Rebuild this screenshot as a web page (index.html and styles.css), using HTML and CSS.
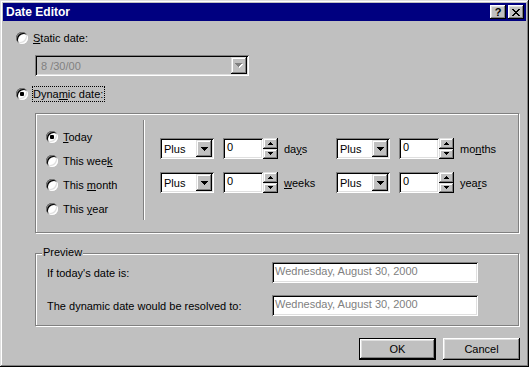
FILE: index.html
```html
<!DOCTYPE html>
<html lang="en">
<head>
  <meta charset="UTF-8">
  <title>Date Editor</title>
  <link rel="stylesheet" href="styles.css">
</head>
<body>
  <div class="window">
    <div class="titlebar">
      <span class="title">Date Editor</span>
      <div class="title-buttons">
        <span class="tbtn help">?</span>
        <span class="tbtn close">
          <svg width="8" height="7" viewBox="0 0 8 7" shape-rendering="crispEdges"><path d="M0 0h2v1H0zM6 0h2v1H6zM1 1h2v1H1zM5 1h2v1H5zM2 2h4v1H2zM3 3h2v1H3zM2 4h4v1H2zM1 5h2v1H1zM5 5h2v1H5zM0 6h2v1H0zM6 6h2v1H6z" fill="#000"/></svg>
        </span>
      </div>
    </div>

    <div class="content">
      <div class="option static">
        <span class="radio"></span>
        <span class="label"><u>S</u>tatic date:</span>
      </div>

      <div class="combo combo-date disabled">
        <span class="combo-text">8 /30/00</span>
        <span class="drop">
          <svg width="8" height="5" viewBox="0 0 8 5" shape-rendering="crispEdges"><path d="M1 1h7v1H1zM2 2h5v1H2zM3 3h3v1H3zM4 4h1v1H4z" fill="#fff"/><path d="M0 0h7v1H0zM1 1h5v1H1zM2 2h3v1H2zM3 3h1v1H3z" fill="#808080"/></svg>
        </span>
      </div>

      <div class="option dynamic">
        <span class="radio checked"></span>
        <span class="label focus">Dyna<u>m</u>ic date:</span>
      </div>

      <div class="group dyn-group">
        <div class="period-list">
          <div class="option"><span class="radio checked"></span><span class="label"><u>T</u>oday</span></div>
          <div class="option"><span class="radio"></span><span class="label">This wee<u>k</u></span></div>
          <div class="option"><span class="radio"></span><span class="label">This <u>m</u>onth</span></div>
          <div class="option"><span class="radio"></span><span class="label">This <u>y</u>ear</span></div>
        </div>
        <div class="vsep"></div>
        <div class="offsets">
          <div class="offset-row">
            <div class="offset">
              <div class="combo combo-small"><span class="combo-text">Plus</span><span class="drop"><svg width="7" height="4" viewBox="0 0 7 4" shape-rendering="crispEdges"><path d="M0 0h7v1H0zM1 1h5v1H1zM2 2h3v1H2zM3 3h1v1H3z" fill="#000"/></svg></span></div>
              <div class="num">0</div>
              <div class="spin">
                <span class="spin-btn"><svg width="5" height="3" viewBox="0 0 5 3" shape-rendering="crispEdges"><path d="M2 0h1v1H2zM1 1h3v1H1zM0 2h5v1H0z" fill="#000"/></svg></span>
                <span class="spin-btn"><svg width="5" height="3" viewBox="0 0 5 3" shape-rendering="crispEdges"><path d="M0 0h5v1H0zM1 1h3v1H1zM2 2h1v1H2z" fill="#000"/></svg></span>
              </div>
              <span class="unit">da<u>y</u>s</span>
            </div>
            <div class="offset">
              <div class="combo combo-small"><span class="combo-text">Plus</span><span class="drop"><svg width="7" height="4" viewBox="0 0 7 4" shape-rendering="crispEdges"><path d="M0 0h7v1H0zM1 1h5v1H1zM2 2h3v1H2zM3 3h1v1H3z" fill="#000"/></svg></span></div>
              <div class="num">0</div>
              <div class="spin">
                <span class="spin-btn"><svg width="5" height="3" viewBox="0 0 5 3" shape-rendering="crispEdges"><path d="M2 0h1v1H2zM1 1h3v1H1zM0 2h5v1H0z" fill="#000"/></svg></span>
                <span class="spin-btn"><svg width="5" height="3" viewBox="0 0 5 3" shape-rendering="crispEdges"><path d="M0 0h5v1H0zM1 1h3v1H1zM2 2h1v1H2z" fill="#000"/></svg></span>
              </div>
              <span class="unit">mo<u>n</u>ths</span>
            </div>
          </div>
          <div class="offset-row">
            <div class="offset">
              <div class="combo combo-small"><span class="combo-text">Plus</span><span class="drop"><svg width="7" height="4" viewBox="0 0 7 4" shape-rendering="crispEdges"><path d="M0 0h7v1H0zM1 1h5v1H1zM2 2h3v1H2zM3 3h1v1H3z" fill="#000"/></svg></span></div>
              <div class="num">0</div>
              <div class="spin">
                <span class="spin-btn"><svg width="5" height="3" viewBox="0 0 5 3" shape-rendering="crispEdges"><path d="M2 0h1v1H2zM1 1h3v1H1zM0 2h5v1H0z" fill="#000"/></svg></span>
                <span class="spin-btn"><svg width="5" height="3" viewBox="0 0 5 3" shape-rendering="crispEdges"><path d="M0 0h5v1H0zM1 1h3v1H1zM2 2h1v1H2z" fill="#000"/></svg></span>
              </div>
              <span class="unit"><u>w</u>eeks</span>
            </div>
            <div class="offset">
              <div class="combo combo-small"><span class="combo-text">Plus</span><span class="drop"><svg width="7" height="4" viewBox="0 0 7 4" shape-rendering="crispEdges"><path d="M0 0h7v1H0zM1 1h5v1H1zM2 2h3v1H2zM3 3h1v1H3z" fill="#000"/></svg></span></div>
              <div class="num">0</div>
              <div class="spin">
                <span class="spin-btn"><svg width="5" height="3" viewBox="0 0 5 3" shape-rendering="crispEdges"><path d="M2 0h1v1H2zM1 1h3v1H1zM0 2h5v1H0z" fill="#000"/></svg></span>
                <span class="spin-btn"><svg width="5" height="3" viewBox="0 0 5 3" shape-rendering="crispEdges"><path d="M0 0h5v1H0zM1 1h3v1H1zM2 2h1v1H2z" fill="#000"/></svg></span>
              </div>
              <span class="unit">yea<u>r</u>s</span>
            </div>
          </div>
        </div>
      </div>

      <div class="group preview">
        <span class="legend">Preview</span>
        <div class="preview-row">
          <span class="preview-label">If today's date is:</span>
          <div class="field">Wednesday, August 30, 2000</div>
        </div>
        <div class="preview-row">
          <span class="preview-label">The dynamic date would be resolved to:</span>
          <div class="field">Wednesday, August 30, 2000</div>
        </div>
      </div>

      <div class="buttons">
        <button class="btn default">OK</button>
        <button class="btn">Cancel</button>
      </div>
    </div>
  </div>
</body>
</html>
```

FILE: styles.css
```css
body {
  margin: 0;
  font-family: "Liberation Sans", Arial, sans-serif;
  font-size: 11px;
  color: #000;
  background-color: #c0c0c0;
}
.window {
  width: 529px;
  height: 367px;
  box-sizing: border-box;
  padding: 3px;
  background-color: #c0c0c0;
  box-shadow: inset -1px -1px #000, inset 1px 1px #dfdfdf, inset -2px -2px #808080, inset 2px 2px #fff;
}

/* title bar */
.titlebar {
  height: 18px;
  background-color: #000080;
  display: flex;
  align-items: center;
  justify-content: space-between;
  padding: 0 2px 0 3px;
}
.title {
  color: #fff;
  font-weight: bold;
  font-size: 12px;
}
.title-buttons {
  display: flex;
  gap: 2px;
}
.tbtn {
  width: 16px;
  height: 14px;
  box-sizing: border-box;
  background-color: #c0c0c0;
  box-shadow: inset -1px -1px #000, inset 1px 1px #fff, inset -2px -2px #808080, inset 2px 2px #dfdfdf;
  display: flex;
  align-items: center;
  justify-content: center;
}
.help {
  font-weight: bold;
  font-size: 11px;
  line-height: 12px;
  padding-bottom: 1px;
}

/* body of the dialog */
.content {
  padding: 9px 7px 0 13px;
}
.option {
  display: flex;
  align-items: center;
  height: 16px;
  gap: 4px;
}
.label {
  border: 1px solid transparent;
  line-height: 14px;
  padding-right: 1px;
  white-space: nowrap;
}
.label.focus {
  border: 1px dotted #000;
}
.radio {
  position: relative;
  width: 12px;
  height: 12px;
  flex: none;
  border-radius: 50%;
  background-color: #fff;
  box-shadow: inset 1px 1px #808080, inset -1px -1px #fff, inset 2px 2px #000, inset -2px -2px #dfdfdf;
}
.radio.checked::after {
  content: "";
  position: absolute;
  left: 4px;
  top: 4px;
  width: 4px;
  height: 4px;
  border-radius: 1px;
  background-color: #000;
}
.dynamic {
  margin-top: 10px;
}

/* combo boxes and fields */
.combo {
  display: flex;
  align-items: stretch;
  box-sizing: border-box;
  padding: 2px;
  background-color: #fff;
  box-shadow: inset 1px 1px #808080, inset -1px -1px #fff, inset 2px 2px #000, inset -2px -2px #dfdfdf;
}
.combo-text {
  flex: 1;
  display: flex;
  align-items: center;
  padding-left: 2px;
}
.drop {
  width: 16px;
  box-sizing: border-box;
  background-color: #c0c0c0;
  box-shadow: inset -1px -1px #000, inset 1px 1px #dfdfdf, inset -2px -2px #808080, inset 2px 2px #fff;
  display: flex;
  align-items: center;
  justify-content: center;
}
.combo-date {
  margin: 9px 0 0 19px;
  width: 214px;
  height: 21px;
}
.combo-date .combo-text {
  padding-left: 4px;
}
.combo.disabled {
  background-color: #c0c0c0;
  color: #808080;
}
.combo-small {
  width: 54px;
  height: 21px;
}

/* group boxes */
.group {
  margin: 11px 0 0 19px;
  width: 484px;
  box-sizing: border-box;
  border: 1px solid #808080;
  box-shadow: 1px 1px #fff, inset 1px 1px #fff;
}
.dyn-group {
  height: 120px;
  display: flex;
  align-items: flex-start;
}
.period-list {
  width: 107px;
  box-sizing: border-box;
  padding: 15px 0 0 10px;
  display: flex;
  flex-direction: column;
  gap: 8px;
}
.vsep {
  width: 1px;
  height: 100px;
  margin-top: 6px;
  background-color: #808080;
  border-right: 1px solid #fff;
}
.offsets {
  padding: 24px 0 0 15px;
  display: flex;
  flex-direction: column;
  gap: 13px;
}
.offset-row {
  display: flex;
}
.offset {
  width: 176px;
  display: flex;
  align-items: center;
}
.num {
  margin-left: 9px;
  width: 40px;
  height: 21px;
  box-sizing: border-box;
  padding: 3px 0 0 4px;
  background-color: #fff;
  box-shadow: inset 1px 1px #808080, inset -1px -1px #fff, inset 2px 2px #000, inset -2px -2px #dfdfdf;
}
.spin {
  width: 15px;
  height: 21px;
  display: flex;
  flex-direction: column;
}
.spin-btn {
  flex: 1;
  background-color: #c0c0c0;
  box-shadow: inset -1px -1px #000, inset 1px 1px #dfdfdf, inset -2px -2px #808080, inset 2px 2px #fff;
  display: flex;
  align-items: center;
  justify-content: center;
}
.unit {
  margin-left: 6px;
}

/* preview */
.preview {
  position: relative;
  margin-top: 20px;
  height: 73px;
  padding: 8px 0 0 11px;
  display: flex;
  flex-direction: column;
  gap: 12px;
}
.legend {
  position: absolute;
  left: 6px;
  top: -8px;
  line-height: 13px;
  padding: 0 1px;
  background-color: #c0c0c0;
}
.preview-row {
  display: flex;
  align-items: center;
}
.preview-label {
  width: 225px;
}
.field {
  width: 206px;
  height: 21px;
  box-sizing: border-box;
  padding: 3px 0 0 3px;
  color: #808080;
  background-color: #fff;
  box-shadow: inset 1px 1px #808080, inset -1px -1px #fff, inset 2px 2px #000, inset -2px -2px #dfdfdf;
}

/* buttons */
.buttons {
  display: flex;
  justify-content: flex-end;
  gap: 7px;
  margin: 12px -1px 0 0;
}
.btn {
  width: 77px;
  height: 22px;
  box-sizing: border-box;
  border: 0;
  padding: 0;
  font-family: inherit;
  font-size: 11px;
  color: #000;
  background-color: #c0c0c0;
  box-shadow: inset -1px -1px #000, inset 1px 1px #fff, inset -2px -2px #808080, inset 2px 2px #dfdfdf;
}
.btn.default {
  border: 1px solid #000;
}
```
